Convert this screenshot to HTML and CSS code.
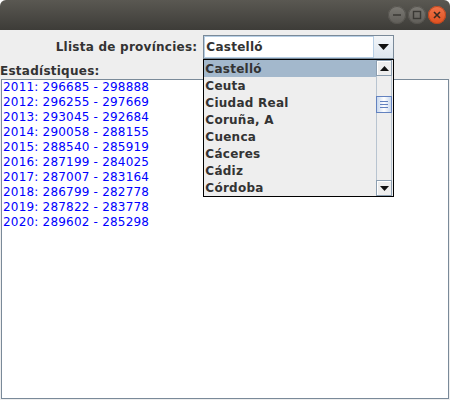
FILE: index.html
```html
<!DOCTYPE html>
<html>
<head>
<meta charset="utf-8">
<link rel="stylesheet" href="styles.css">
</head>
<body>
<div class="window">
  <div class="titlebar">
    <div class="wbtn wbtn-min"><svg width="18" height="18" viewBox="0 0 18 18"><line x1="5" y1="9" x2="13" y2="9" stroke="#3a3935" stroke-width="1.6"/></svg></div>
    <div class="wbtn wbtn-max"><svg width="18" height="18" viewBox="0 0 18 18"><rect x="5.5" y="5.5" width="7" height="7" fill="none" stroke="#3a3935" stroke-width="1.4"/></svg></div>
    <div class="wbtn wbtn-close"><svg width="18" height="18" viewBox="0 0 18 18"><path d="M6 6 L12 12 M12 6 L6 12" stroke="#3a2a20" stroke-width="1.6"/></svg></div>
  </div>
  <div class="content">
    <div class="toprow">
      <span class="label">Llista de províncies:</span>
      <div class="combo">
        <div class="combo-field">Castelló</div>
        <div class="combo-arrow"><svg width="11" height="6" viewBox="0 0 11 6"><path d="M0 0 H11 L5.5 6 Z" fill="#111"/></svg></div>
        <div class="popup">
          <ul class="list">
            <li class="item selected">Castelló</li>
            <li class="item">Ceuta</li>
            <li class="item">Ciudad Real</li>
            <li class="item">Coruña, A</li>
            <li class="item">Cuenca</li>
            <li class="item">Cáceres</li>
            <li class="item">Cádiz</li>
            <li class="item">Córdoba</li>
          </ul>
          <div class="scrollbar">
            <div class="sb-btn"><svg width="9" height="5" viewBox="0 0 9 5"><path d="M0 5 H9 L4.5 0 Z" fill="#111"/></svg></div>
            <div class="sb-track">
              <div class="sb-gap1"></div>
              <div class="sb-thumb"><span></span><span></span><span></span></div>
            </div>
            <div class="sb-btn"><svg width="9" height="5" viewBox="0 0 9 5"><path d="M0 0 H9 L4.5 5 Z" fill="#111"/></svg></div>
          </div>
        </div>
      </div>
    </div>
    <div class="stats-label">Estadístiques:</div>
    <div class="textarea">
      <div>2011: 296685 - 298888</div>
      <div>2012: 296255 - 297669</div>
      <div>2013: 293045 - 292684</div>
      <div>2014: 290058 - 288155</div>
      <div>2015: 288540 - 285919</div>
      <div>2016: 287199 - 284025</div>
      <div>2017: 287007 - 283164</div>
      <div>2018: 286799 - 282778</div>
      <div>2019: 287822 - 283778</div>
      <div>2020: 289602 - 285298</div>
    </div>
  </div>
</div>
</body>
</html>
```
FILE: styles.css
```css
* { box-sizing: border-box; }
html, body { margin: 0; padding: 0; background: #ffffff; }
body { width: 450px; height: 400px; overflow: hidden; font-family: "DejaVu Sans", sans-serif; }
.window { width: 450px; height: 400px; display: flex; flex-direction: column; background: #eeeeee; border-radius: 6px 6px 0 0; overflow: hidden; }
.titlebar { height: 30px; flex: none; background: linear-gradient(#5a5852, #3d3c38); display: flex; justify-content: flex-end; align-items: center; gap: 2px; padding: 0 4px 1px 0; }
.wbtn { width: 18px; height: 18px; border-radius: 50%; display: flex; align-items: center; justify-content: center; }
.wbtn-min, .wbtn-max { background: linear-gradient(#7b7973, #5f5d58); box-shadow: inset 0 0 0 1px #55534e; }
.wbtn-close { background: linear-gradient(#f0744a, #e0501f); box-shadow: inset 0 0 0 1px #b8461f; }
.content { flex: 1; display: flex; flex-direction: column; padding: 0 1px 1px 1px; min-height: 0; }
.toprow { display: flex; justify-content: center; align-items: center; gap: 6px; padding: 5px 0; }
.label { font-size: 12px; font-weight: bold; color: #333333; letter-spacing: 0.25px; }
.combo { position: relative; width: 191px; height: 24px; display: flex; border: 1px solid #7a8a99; background: #ffffff; }
.combo-field { flex: 1; font-size: 12px; font-weight: bold; color: #333333; letter-spacing: 0.25px; line-height: 20px; padding-left: 1px; border: 1px solid #b8cfe5; border-right: none; background: #ffffff; }
.combo-arrow { width: 20px; flex: none; display: flex; align-items: center; justify-content: center; background: linear-gradient(#f2f5f8, #dde6ef); border-left: 1px solid #b8cfe5; }
.popup { position: absolute; left: -1px; top: 23px; width: 191px; height: 138px; border: 1px solid #000000; background: #eeeeee; display: flex; z-index: 5; }
.list { list-style: none; margin: 0; padding: 0; flex: 1; }
.item { height: 17px; line-height: 18px; font-size: 12px; font-weight: bold; color: #333333; letter-spacing: 0.25px; padding-left: 1px; }
.item.selected { background: #a3b8cc; }
.scrollbar { width: 16px; flex: none; display: flex; flex-direction: column; margin-right: 1px; }
.sb-btn { height: 16px; flex: none; display: flex; align-items: center; justify-content: center; background: #eeeeee; border: 1px solid #8d9fb1; box-shadow: inset 1px 1px 0 #ffffff; }
.sb-track { flex: 1; display: flex; flex-direction: column; border-left: 1px solid #b8c4d0; border-right: 1px solid #b8c4d0; background: #eeeeee; }
.sb-gap1 { height: 20px; flex: none; }
.sb-thumb { height: 17px; flex: none; margin: 0 -1px; border: 1px solid #6382bf; background: linear-gradient(90deg, #c8d8ee, #ffffff 50%, #c8d8ee); display: flex; flex-direction: column; justify-content: center; align-items: center; gap: 2px; }
.sb-thumb span { display: block; width: 8px; height: 1px; background: #6382bf; }
.stats-label { font-size: 12px; font-weight: bold; color: #333333; letter-spacing: 0.25px; height: 15px; line-height: 15px; margin-left: -1px; }
.textarea { flex: 1; background: #ffffff; border: 1px solid #7a8a99; padding: 0 1px; font-size: 12px; color: #0000ff; letter-spacing: 0.2px; line-height: 15px; }
```
